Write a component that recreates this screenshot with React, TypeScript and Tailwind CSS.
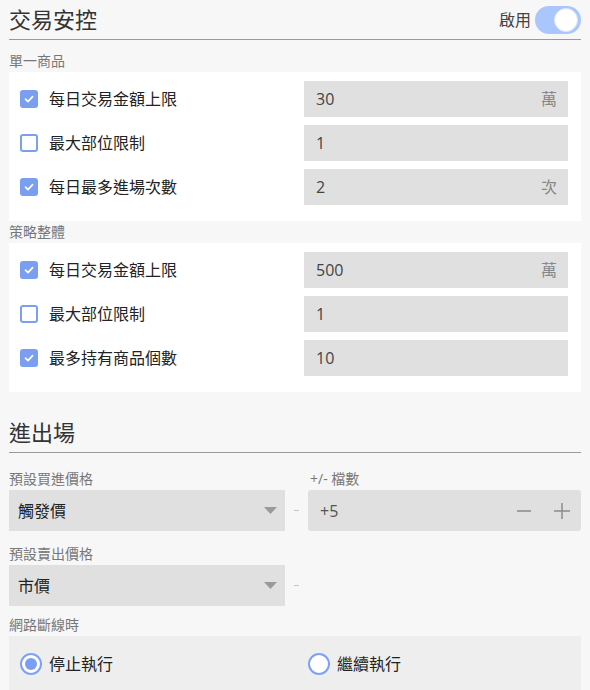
import React from "react"

function Checkbox({ checked }: { checked: boolean }) {
  if (checked) {
    return (
      <div className="w-[18px] h-[18px] rounded-[3px] bg-[#7a9ff0] flex items-center justify-center">
        <svg width="12" height="12" viewBox="0 0 12 12" fill="none">
          <path d="M2.5 6.2 L5 8.6 L9.6 3.6" stroke="white" strokeWidth="1.7" strokeLinecap="round" strokeLinejoin="round" />
        </svg>
      </div>
    )
  }
  return <div className="w-[18px] h-[18px] rounded-[3px] border-2 border-[#7ba0f0] bg-white" />
}

function Row({ checked, label, value, unit }: { checked: boolean; label: string; value: string; unit?: string }) {
  return (
    <div className="flex items-center h-9">
      <div className="ml-[11px]">
        <Checkbox checked={checked} />
      </div>
      <span className="ml-[11px] text-[16px] text-[#222]">{label}</span>
      <div className="ml-auto mr-[13px] w-[264px] h-9 bg-[#e0e0e0] flex items-center justify-between pl-3 pr-[11px]">
        <span className="text-[16px] text-[#444]">{value}</span>
        {unit && <span className="text-[16px] text-[#888]">{unit}</span>}
      </div>
    </div>
  )
}

function Label({ children, className = "" }: { children: React.ReactNode; className?: string }) {
  return <div className={"h-[22px] leading-[22px] text-[14px] text-[#777] " + className}>{children}</div>
}

function SectionTitle({ title, right, className = "" }: { title: string; right?: React.ReactNode; className?: string }) {
  return (
    <div className={"flex items-center justify-between h-[40px] border-b border-[#9a9a9a] " + className}>
      <h1 className="text-[22px] text-[#333] font-normal">{title}</h1>
      {right}
    </div>
  )
}

function Select({ value }: { value: string }) {
  return (
    <div className="w-[276px] h-[41px] bg-[#e0e0e0] flex items-center justify-between pl-[9px] pr-2">
      <span className="text-[16px] text-[#222]">{value}</span>
      <svg width="13" height="7" viewBox="0 0 13 7">
        <path d="M0 0 H13 L6.5 7 Z" fill="#9a9a9a" />
      </svg>
    </div>
  )
}

function Sep() {
  return (
    <div className="w-[23px] flex justify-center">
      <div className="w-[5px] h-px bg-[#c8c8c8]" />
    </div>
  )
}

function Radio({ checked, label }: { checked: boolean; label: string }) {
  return (
    <div className="flex items-center gap-[7px]">
      <div className="w-[22px] h-[22px] rounded-full border-2 border-[#7ea2f2] bg-white flex items-center justify-center">
        {checked && <div className="w-3 h-3 rounded-full bg-[#7a9ef0]" />}
      </div>
      <span className="text-[16px] text-[#222]">{label}</span>
    </div>
  )
}

export default function App() {
  return (
    <div className="min-h-screen bg-[#f7f7f7] px-[9px] font-['Open_Sans','Noto_Sans_CJK_TC',sans-serif]">
      <SectionTitle
        title="交易安控"
        right={
          <div className="flex items-center gap-1">
            <span className="text-[16px] text-[#444]">啟用</span>
            <div className="w-[46px] h-[28px] rounded-full bg-[#a9c7fc] flex items-center justify-end pr-[3px]">
              <div className="w-6 h-6 rounded-full bg-white border border-[#dfe6f3]" />
            </div>
          </div>
        }
      />

      <Label className="mt-[10px]">單一商品</Label>
      <div className="bg-white pt-[9px] pb-4 flex flex-col gap-2">
        <Row checked label="每日交易金額上限" value="30" unit="萬" />
        <Row checked={false} label="最大部位限制" value="1" />
        <Row checked label="每日最多進場次數" value="2" unit="次" />
      </div>

      <Label>策略整體</Label>
      <div className="bg-white pt-[9px] pb-4 flex flex-col gap-2">
        <Row checked label="每日交易金額上限" value="500" unit="萬" />
        <Row checked={false} label="最大部位限制" value="1" />
        <Row checked label="最多持有商品個數" value="10" />
      </div>

      <SectionTitle title="進出場" className="mt-[21px]" />

      <div className="flex mt-[15px]">
        <Label className="w-[299px]">預設買進價格</Label>
        <Label className="pl-0.5">+/- 檔數</Label>
      </div>
      <div className="flex items-center">
        <Select value="觸發價" />
        <Sep />
        <div className="flex-1 h-[41px] rounded-[3px] bg-[#e0e0e0] flex items-center pl-3 pr-[11px]">
          <span className="text-[16px] text-[#555]">+5</span>
          <svg className="ml-auto" width="14" height="16" viewBox="0 0 14 16">
            <path d="M0 8 H14" stroke="#8a8a8a" strokeWidth="1.5" />
          </svg>
          <svg className="ml-[23px]" width="16" height="16" viewBox="0 0 16 16">
            <path d="M0 8 H16 M8 0 V16" stroke="#8a8a8a" strokeWidth="1.5" />
          </svg>
        </div>
      </div>

      <Label className="mt-3">預設賣出價格</Label>
      <div className="flex items-center">
        <Select value="市價" />
        <Sep />
      </div>

      <Label className="mt-2">網路斷線時</Label>
      <div className="bg-[#eeeeee] h-[60px] flex items-start pt-4">
        <div className="w-[299px] pl-[11px]">
          <Radio checked label="停止執行" />
        </div>
        <Radio checked={false} label="繼續執行" />
      </div>
    </div>
  )
}
